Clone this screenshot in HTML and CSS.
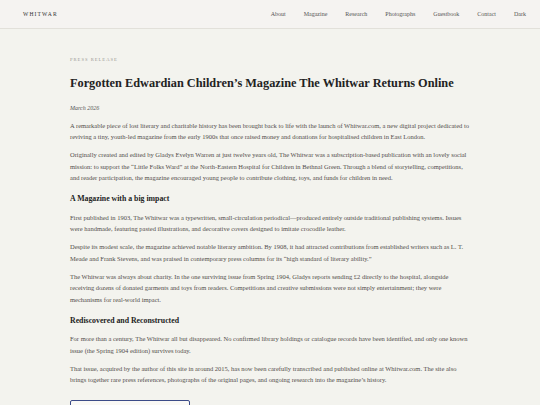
FILE: index.html
```html
<!DOCTYPE html>
<html lang="en">
<head>
<meta charset="utf-8">
<title>Whitwar</title>
<link rel="stylesheet" href="styles.css">
</head>
<body>
<header class="site-header">
  <a class="brand" href="#">WHITWAR</a>
  <nav class="nav">
    <a href="#">About</a>
    <a href="#">Magazine</a>
    <a href="#">Research</a>
    <a href="#">Photographs</a>
    <a href="#">Guestbook</a>
    <a href="#">Contact</a>
    <a href="#">Dark</a>
  </nav>
</header>
<main class="article">
  <p class="label">PRESS RELEASE</p>
  <h1 class="title">Forgotten Edwardian Children’s Magazine The Whitwar Returns Online</h1>
  <p class="date">March 2026</p>
  <p>A remarkable piece of lost literary and charitable history has been brought back to life with the launch of Whitwar.com, a new digital project dedicated to reviving a tiny, youth-led magazine from the early 1900s that once raised money and donations for hospitalised children in East London.</p>
  <p>Originally created and edited by Gladys Evelyn Warren at just twelve years old, The Whitwar was a subscription-based publication with an lovely social mission: to support the “Little Folks Ward” at the North-Eastern Hospital for Children in Bethnal Green. Through a blend of storytelling, competitions, and reader participation, the magazine encouraged young people to contribute clothing, toys, and funds for children in need.</p>
  <h2 class="sub">A Magazine with a big impact</h2>
  <p>First published in 1903, The Whitwar was a typewritten, small-circulation periodical—produced entirely outside traditional publishing systems. Issues were handmade, featuring pasted illustrations, and decorative covers designed to imitate crocodile leather.</p>
  <p>Despite its modest scale, the magazine achieved notable literary ambition. By 1908, it had attracted contributions from established writers such as L. T. Meade and Frank Stevens, and was praised in contemporary press columns for its “high standard of literary ability.”</p>
  <p>The Whitwar was always about charity. In the one surviving issue from Spring 1904, Gladys reports sending £2 directly to the hospital, alongside receiving dozens of donated garments and toys from readers. Competitions and creative submissions were not simply entertainment; they were mechanisms for real-world impact.</p>
  <h2 class="sub">Rediscovered and Reconstructed</h2>
  <p>For more than a century, The Whitwar all but disappeared. No confirmed library holdings or catalogue records have been identified, and only one known issue (the Spring 1904 edition) survives today.</p>
  <p>That issue, acquired by the author of this site in around 2015, has now been carefully transcribed and published online at Whitwar.com. The site also brings together rare press references, photographs of the original pages, and ongoing research into the magazine’s history.</p>
  <div class="cta"></div>
</main>
</body>
</html>
```
FILE: styles.css
```css
html, body {
  margin: 0;
  padding: 0;
}
body {
  background: #f3f3ee;
  font-family: "Liberation Serif", "DejaVu Serif", serif;
  color: #524d4a;
  overflow: hidden;
}
a {
  text-decoration: none;
  color: inherit;
}
.site-header {
  height: 28px;
  background: #f5f3f1;
  border-bottom: 1px solid #e2e0da;
  display: flex;
  align-items: center;
  justify-content: space-between;
  padding: 0 14px 0 23px;
}
.brand {
  font-size: 5.6px;
  letter-spacing: 1.1px;
  color: #333;
}
.nav {
  display: flex;
  gap: 18px;
  font-size: 6px;
  color: #555;
}
.article {
  width: 400px;
  margin: 0 auto;
  padding-top: 27px;
}
.label {
  margin: 0;
  font-size: 4.6px;
  letter-spacing: 1px;
  color: #9a9794;
  line-height: 8px;
}
.title {
  margin: 11px 0 0;
  font-size: 12.3px;
  line-height: 16px;
  font-weight: bold;
  color: #222;
}
.date {
  margin: 12px 0 0;
  font-style: italic;
  font-size: 6px;
  line-height: 10px;
  color: #555;
}
.article p:not(.label):not(.date) {
  margin: 6.5px 0 0;
  font-size: 6.5px;
  line-height: 11.5px;
}
.article p.date + p {
  margin-top: 7px;
}
.sub {
  margin: 9.5px 0 0;
  font-size: 7.8px;
  line-height: 12px;
  font-weight: bold;
  color: #222;
}
.article .sub + p {
  margin-top: 6px;
}
.cta {
  margin-top: 14px;
  width: 118px;
  height: 20px;
  border: 1.2px solid #3c4c88;
  border-radius: 2px;
  background: #faf9f5;
}
```
